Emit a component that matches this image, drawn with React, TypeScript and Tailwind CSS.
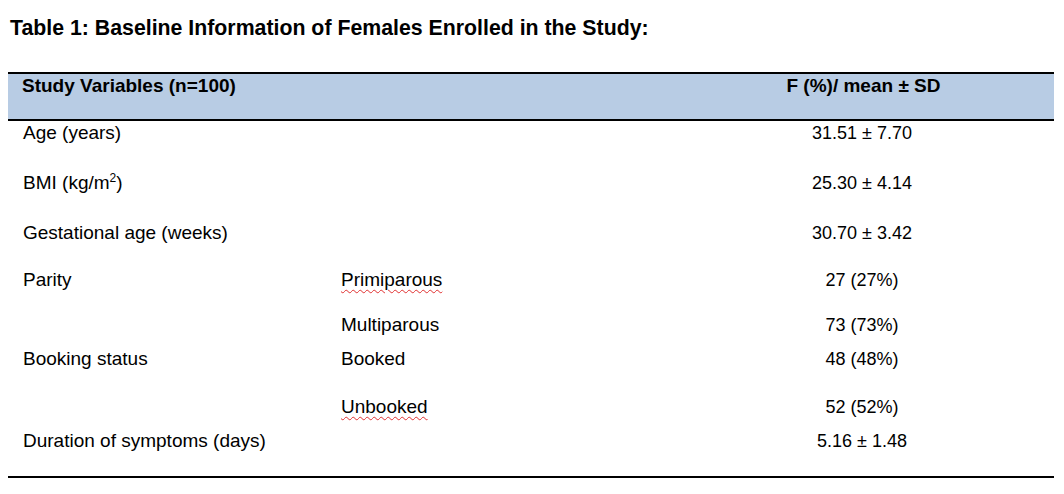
const rows = [
  { label: "Age (years)", sub: "", value: "31.51 ± 7.70", h: "h-[50px]" },
  { label: "BMI (kg/m²)", sub: "", value: "25.30 ± 4.14", h: "h-[50px]", bmi: true },
  { label: "Gestational age (weeks)", sub: "", value: "30.70 ± 3.42", h: "h-[47px]" },
  { label: "Parity", sub: "Primiparous", value: "27 (27%)", h: "h-[45px]", squiggle: true },
  { label: "", sub: "Multiparous", value: "73 (73%)", h: "h-[34px]" },
  { label: "Booking status", sub: "Booked", value: "48 (48%)", h: "h-[48px]" },
  { label: "", sub: "Unbooked", value: "52 (52%)", h: "h-[34px]", squiggle: true },
  { label: "Duration of symptoms (days)", sub: "", value: "5.16 ± 1.48", h: "h-[46px]" },
];

export default function App() {
  return (
    <div className="w-[1064px] h-[494px] bg-white text-black font-['Liberation_Sans',Arial,sans-serif] overflow-hidden">
      {/* caption */}
      <h1 className="pt-[16px] pl-[10px] text-[21.3px] leading-[24px] font-bold">
        Table 1: Baseline Information of Females Enrolled in the Study:
      </h1>

      <div className="mt-[32px] ml-[8px] w-[1046px]">
        {/* header band */}
        <div className="grid grid-cols-[333px_329px_384px] h-[49px] bg-[#b8cce4] border-t-2 border-b-2 border-black pt-[1px] text-[19px] leading-[22px] font-bold">
          <div className="pl-[14px]">Study Variables (n=100)</div>
          <div />
          <div className="text-center pl-[3px]">F (%)/ mean ± SD</div>
        </div>

        {/* body */}
        <div className="pt-[1px] border-b-2 border-black">
          {rows.map((r, i) => (
            <div key={i} className={`grid grid-cols-[333px_329px_384px] ${r.h}`}>
              <div className="pl-[15px] text-[19px] leading-[22px]">
                {r.bmi ? (
                  <>
                    BMI (kg/m<sup className="text-[12px] relative -top-[7px] align-baseline">2</sup>)
                  </>
                ) : (
                  r.label
                )}
              </div>
              <div className="text-[19px] leading-[22px]">
                {r.squiggle ? (
                  <span className="underline decoration-wavy decoration-[#e03030] decoration-[1px] underline-offset-[3px]">
                    {r.sub}
                  </span>
                ) : (
                  r.sub
                )}
              </div>
              <div className="text-center text-[18px] leading-[22px]">{r.value}</div>
            </div>
          ))}
        </div>
      </div>
    </div>
  );
}
